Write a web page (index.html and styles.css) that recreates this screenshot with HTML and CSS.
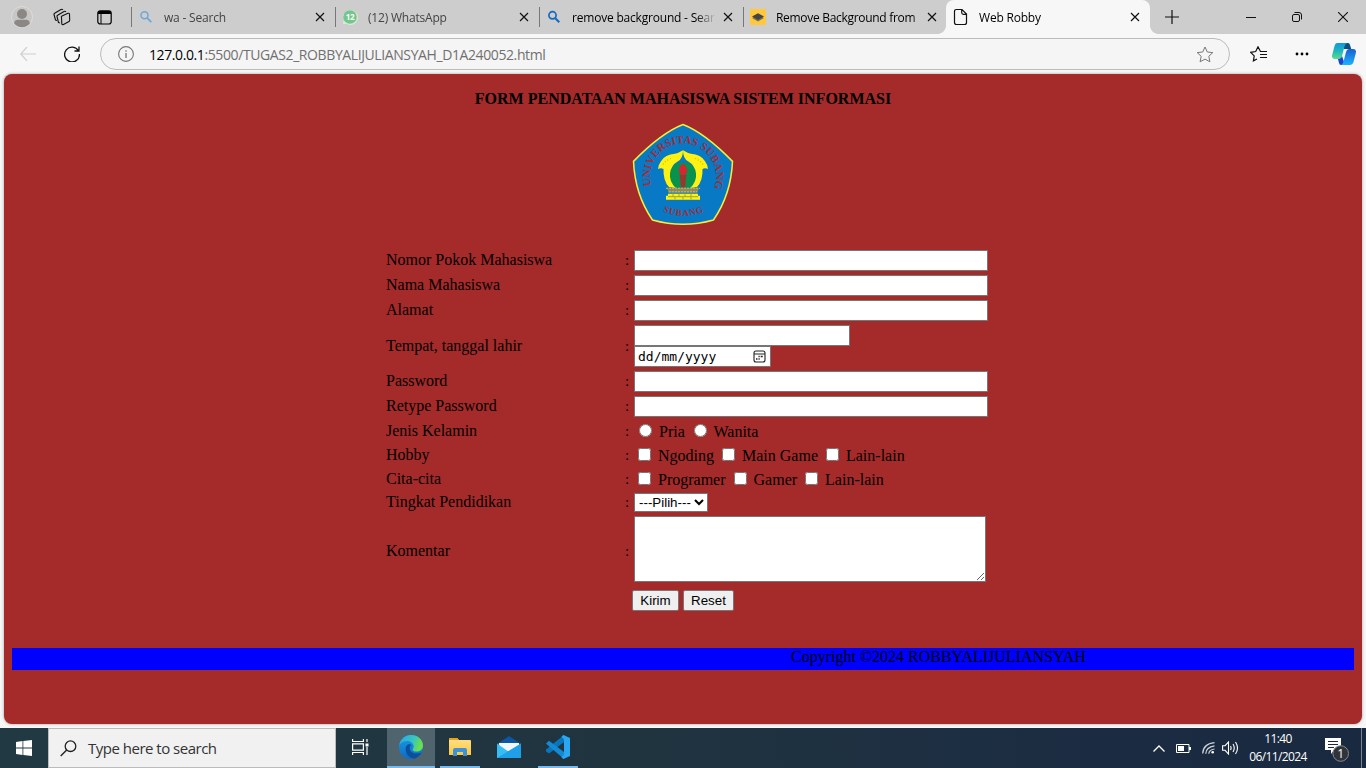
FILE: index.html
```html
<!DOCTYPE html>
<html lang="en">
<head>
<meta charset="utf-8">
<title>Web Robby</title>
<link rel="stylesheet" href="styles.css">
</head>
<body>
<svg width="0" height="0" class="defs">
  <defs>
    <symbol id="x" viewBox="0 0 10 10"><path d="M1 1l8 8M9 1L1 9" stroke="#111" stroke-width="1.2" fill="none"/></symbol>
    <linearGradient id="ea" x1="0" y1="0" x2="1" y2="0.3"><stop offset="0" stop-color="#2aa5e8"/><stop offset=".6" stop-color="#35c3c5"/><stop offset="1" stop-color="#6be04a"/></linearGradient>
    <linearGradient id="eb" x1="0" y1="0" x2="0" y2="1"><stop offset="0" stop-color="#1b9de2"/><stop offset="1" stop-color="#0c6bc9"/></linearGradient>
    <linearGradient id="ca" x1="0" y1="0" x2="0" y2="1"><stop offset="0" stop-color="#1597dc"/><stop offset=".5" stop-color="#1fb6bd"/><stop offset="1" stop-color="#5fdc84"/></linearGradient>
    <linearGradient id="cb" x1="0" y1="0" x2="0" y2="1"><stop offset="0" stop-color="#1d5fd0"/><stop offset="1" stop-color="#18b4ff"/></linearGradient>
    <linearGradient id="fo" x1="0" y1="0" x2="0" y2="1"><stop offset="0" stop-color="#ffe08a"/><stop offset="1" stop-color="#ffc83d"/></linearGradient>
  </defs>
</svg>

<header class="tabbar">
  <div class="tools">
    <svg class="avatar" width="22" height="22" viewBox="0 0 22 22"><circle cx="11" cy="11" r="10.5" fill="#c9c7c5" stroke="#dedcda"/><circle cx="11" cy="8" r="5" fill="#8b8784"/><path d="M3.2 17.5c0-3 2-3.800 4-3.800h7.600c2 0 4 .8 4 3.800a10 10 0 0 1-15.600 0z" fill="#8b8784"/></svg>
    <svg class="spaces" width="18" height="18" viewBox="0 0 18 18" fill="#cdcdcd" stroke="#111" stroke-width="1.1" stroke-linejoin="round"><path d="M4 12.500L2.500 12 1 6.500Q.8 5.500 2 5L8 1.500Q9 1 10 1.700"/><path d="M7 15L5.500 14.500 4 8.500Q3.800 7.500 5 7L11 3.500Q12 3 13 3.700"/><path d="M8.500 9.500Q8 8.400 9 8L15 5.300Q16.500 5 16.500 6.200L16.700 12Q16.700 13 16 13.400L10.500 16.500Q9 17 8.800 15.800z"/></svg>
    <svg class="vert" width="15" height="15" viewBox="0 0 15 15"><rect x=".8" y=".8" width="13.400" height="13.200" rx="2.500" fill="none" stroke="#000" stroke-width="1.200"/><path d="M1 4V3Q1 1 3 1h9q2 0 2 2v1z"/><path d="M4 4v10" stroke="#000"/></svg>
  </div>
  <div class="tab dim"><svg class="fav" width="16" height="16" viewBox="0 0 16 16"><circle cx="6.500" cy="6.300" r="3.500" fill="none" stroke="#6ea6d8" stroke-width="1.500"/><path d="M9.300 9.200l4 4" stroke="#6ea6d8" stroke-width="1.800"/></svg><span class="name">wa - Search</span><svg class="close"><use href="#x"/></svg></div>
  <div class="tab dim"><svg class="fav" width="16" height="16" viewBox="0 0 16 16"><path d="M1 15l.5-4A7.500 7.500 0 1 1 5 15z" fill="#d8e9dc"/><circle cx="8" cy="8" r="6.800" fill="#74c68b"/><text x="8" y="11" font-size="8" text-anchor="middle" fill="#fff" font-weight="bold" class="ui">12</text></svg><span class="name">(12) WhatsApp</span><svg class="close"><use href="#x"/></svg></div>
  <div class="tab"><svg class="fav" width="16" height="16" viewBox="0 0 16 16"><circle cx="6.500" cy="6.300" r="3.600" fill="none" stroke="#1468c0" stroke-width="1.700"/><path d="M9.300 9.200l4 4" stroke="#1468c0" stroke-width="2"/></svg><span class="name">remove background - Sear</span><svg class="close"><use href="#x"/></svg></div>
  <div class="tab"><svg class="fav" width="16" height="16" viewBox="0 0 16 16"><path fill="#ffc83d" d="M0 0h16v16H0z"/><path d="M2 9l6-3 6 3-6 3.500z" fill="#7d7455"/><path d="M2 7.500l6-3.200 6 3.200-6 3.500z" fill="#454545"/></svg><span class="name plain">Remove Background from</span><svg class="close"><use href="#x"/></svg></div>
  <div class="tab active"><svg class="fav" width="16" height="18" viewBox="0 0 16 18"><path d="M3.500 1.500h5.500l4.500 4.500v8.500q0 2-2 2h-8q-2 0-2-2v-11q0-2 2-2zM8.700 1.500v3q0 1.800 1.800 1.800h3" fill="none" stroke="#111" stroke-width="1.200"/></svg><span class="name">Web Robby</span><svg class="close"><use href="#x"/></svg></div>
  <svg class="plus" width="14" height="14" viewBox="0 0 14 14"><path d="M7 0v14M0 7h14" stroke="#111" stroke-width="1.200"/></svg>
  <div class="win">
    <svg width="10" height="10" viewBox="0 0 10 10"><path d="M0 5.500h10" stroke="#111"/></svg>
    <svg width="10" height="10" viewBox="0 0 10 10" fill="none" stroke="#111"><rect x=".5" y="2.500" width="7" height="7" rx="1.500"/><path d="M2.500.5h4.500q2.500 0 2.500 2.500v4.500"/></svg>
    <svg width="10" height="10" viewBox="0 0 10 10"><path d="M0 0l10 10M10 0L0 10" stroke="#111" stroke-width="1.100"/></svg>
  </div>
</header>

<nav class="navbar">
  <svg class="back" width="16" height="14" viewBox="0 0 16 14"><path d="M7 0L.8 7 7 14M1 7h15" fill="none" stroke="#cfcfcf" stroke-width="1.200"/></svg>
  <svg class="reload" width="16" height="16" viewBox="0 0 16 16"><path d="M14.500 5A7.400 7.400 0 1 0 15.400 8M15 .5V5h-4.500" fill="none" stroke="#111" stroke-width="1.300"/></svg>
  <div class="address">
    <svg width="16" height="16" viewBox="0 0 16 16"><circle cx="8" cy="8" r="7.400" fill="none" stroke="#767676" stroke-width="1.100"/><path d="M8 7v5M8 4.200v1.500" stroke="#767676" stroke-width="1.300"/></svg>
    <span class="url"><b>127.0.0.1</b>:5500/TUGAS2_ROBBYALIJULIANSYAH_D1A240052.html</span>
    <svg class="star" width="18" height="17" viewBox="0 0 18 17"><path d="M9 1l2.300 5 5.500.6-4 3.700 1.100 5.500L9 13.100l-4.900 2.700 1.100-5.500-4-3.700L6.700 6z" fill="none" stroke="#777" stroke-linejoin="round"/></svg>
  </div>
  <svg class="favs" width="17" height="16" viewBox="0 0 17 16"><path d="M11 5.500h-.5L8 .8 5.700 5.500.7 6.300l3.500 3.600-.8 5L7 13M11 5.500h6M10 8.500h7M10 11.500h7" fill="none" stroke="#111" stroke-width="1.200"/></svg>
  <svg class="dots" width="14" height="4" viewBox="0 0 14 4"><circle cx="2" cy="2" r="1.400"/><circle cx="7" cy="2" r="1.400"/><circle cx="12" cy="2" r="1.400"/></svg>
  <svg class="copilot" width="24" height="22" viewBox="0 0 24 22"><path d="M11 0h5q1.500 0 2 2l1.200 4H12z" fill="#0a4f80"/><path d="M5 0h10q-2 1-2.700 4L10 13q-.8 3-3 3H3q-4 0-2.700-4.500L2.500 3Q3.300 0 5 0z" fill="url(#ca)"/><path d="M6 16q3 0 4-3l3 9H9q-1.500 0-2-2z" fill="#1546cf"/><path d="M17 6h4q4 0 2.700 4.500L21.500 19q-.8 3-3 3H9q2-1 2.700-4L14 9q.8-3 3-3z" fill="url(#cb)"/></svg>
</nav>

<main class="page">
  <h1>FORM PENDATAAN MAHASISWA SISTEM INFORMASI</h1>
  <svg class="logo" width="102" height="103" viewBox="0 0 102 102" preserveAspectRatio="none">
    <defs><path id="fish" d="M51 27Q46 30 43 30.500 33 31 29 38 26 42 26 45.500 29 44 31.500 45.500 31 57 37 63.500L44 64.500Q37 58 38 50 39 42 46 38 51 35 51 27z"/></defs>
    <path d="M51 1.500Q73 10 100.500 38Q99 71 81.500 96Q51 104.500 20.500 96Q3 71 1.500 38Q29 10 51 1.500z" fill="#0879c4" stroke="#f1ef3c" stroke-width="1.500"/>
    <path id="arc" d="M19.500 63A33 33 0 1 1 82.500 63" fill="none"/>
    <path id="low" d="M30 87Q51 97 74 87" fill="none"/>
    <text class="seal"><textPath href="#arc" startOffset="1" textLength="124">UNIVERSITAS SUBANG</textPath></text>
    <text class="seal small"><textPath href="#low" startOffset="1" textLength="42">SUBANG</textPath></text>
    <path d="M37 64V53Q39 39 51 39t14 14v11z" fill="#08924c"/>
    <use href="#fish" fill="#fff212"/><use href="#fish" fill="#fff212" transform="matrix(-1 0 0 1 102 0)"/>
    <path d="M31 41q3-4 8-6M71 41q-3-4-8-6" stroke="#c5a80e" stroke-dasharray="1 2" fill="none"/>
    <path d="M47.500 51h7l-1.500 13h-4z" fill="#963832"/><path d="M51 40q-5 4-4 9l4 3 4-3q1-5-4-9z" fill="#d52631"/>
    <path d="M35 64h32l-1.500 5h-29z" fill="#8d8970"/><path d="M34 64.500h34M37 68h28" stroke="#c9c03d" stroke-dasharray="2 1"/>
    <path d="M36 70h30v2h2v4H34v-4h2z" fill="#fff212"/><path d="M36 73h30M41 70.500v2M47 70.500v2M53 70.500v2M59 70.500v2M43 73.500v2M51 73.500v2M59 73.500v2" stroke="#50714f" stroke-width=".6"/>
  </svg>

  <form class="form">
    <div class="row text"><label>Nomor Pokok Mahasiswa</label><i>:</i><input class="field" type="text"></div>
    <div class="row text"><label>Nama Mahasiswa</label><i>:</i><input class="field" type="text"></div>
    <div class="row text"><label>Alamat</label><i>:</i><input class="field" type="text"></div>
    <div class="row birth"><label>Tempat, tanggal lahir</label><i>:</i><div><input class="field place" type="text"><div class="field date"><span>dd/mm/yyyy</span><svg width="13" height="13" viewBox="0 0 13 13"><rect x="1" y="1" width="11" height="11" rx="2" fill="none" stroke="#222" stroke-width="1.100"/><path d="M1 4h11" stroke="#222"/><path d="M5.500 6.500h1.200M7.700 6.500h2M3 9h1.500M5.500 9h1.200" stroke="#222" stroke-width="1.300"/></svg></div></div></div>
    <div class="row text"><label>Password</label><i>:</i><input class="field" type="password"></div>
    <div class="row text"><label>Retype Password</label><i>:</i><input class="field" type="password"></div>
    <div class="row choice"><label>Jenis Kelamin</label><i>:</i><div class="opts"><input type="radio"> Pria <input type="radio"> Wanita</div></div>
    <div class="row choice"><label>Hobby</label><i>:</i><div class="opts"><input type="checkbox"> Ngoding <input type="checkbox"> Main Game <input type="checkbox"> Lain-lain</div></div>
    <div class="row choice"><label>Cita-cita</label><i>:</i><div class="opts"><input type="checkbox"> Programer <input type="checkbox"> Gamer <input type="checkbox"> Lain-lain</div></div>
    <div class="row level"><label>Tingkat Pendidikan</label><i>:</i><select><option>---Pilih---</option></select></div>
    <div class="row comment"><label>Komentar</label><i>:</i><textarea></textarea></div>
    <div class="actions"><button type="button" class="send">Kirim</button><button type="button" class="reset">Reset</button></div>
  </form>
  <footer class="copy"><span>Copyright ©2024 ROBBYALIJULIANSYAH</span></footer>
</main>

<div class="taskbar">
  <div class="start"><svg width="16" height="16" viewBox="0 0 16 16" fill="#fff"><path d="M0 2l6.500-.9v6.400H0zM7.300 1L16 0v7.500H7.300zM0 8.500h6.500V15L0 14zM7.300 8.500H16V16l-8.700-1z"/></svg></div>
  <div class="search"><svg width="17" height="17" viewBox="0 0 17 17"><circle cx="10.500" cy="6.200" r="5.300" fill="none" stroke="#222" stroke-width="1.300"/><path d="M6.700 10L.7 16" stroke="#222" stroke-width="1.400"/></svg><span>Type here to search</span></div>
  <div class="task view"><svg width="17" height="16" viewBox="0 0 17 16" fill="none" stroke="#fff" stroke-width="1.200"><path d="M.6 0v2.500h10.800V0M.6 16v-2.500h10.800V16M.6 4.800h10.800v6.400H.6zM15 0v3M15 8v8"/><path d="M13.500 4.500h3v3h-3z" fill="#fff" stroke="none"/></svg></div>
  <div class="task edge"><svg width="24" height="24" viewBox="0 0 24 24"><circle cx="12" cy="12" r="12" fill="url(#eb)"/><path d="M.3 10C1.500 4 6.500 0 12 0c7 0 12 5 12 10.500 0 4-3 6-6.500 6-2.500 0-4-1-4-1.800 0-.6 1.200-1.200 1.200-3.200C14.700 8.500 12 6 8.500 6 4.500 6 1.500 8 .3 10z" fill="url(#ea)"/><path d="M8.700 9.500c-1.600 1.500-2 3-2 5 0 5 4.300 9.300 9 8.900 3-1 5.700-3.400 7-6-3 1.600-7.500 1.600-10-.4-2.500-2-2.700-5.400 0-7.200-1.300-.7-2.700-.9-4-.3z" fill="#0c4f9b"/></svg></div>
  <div class="task files"><svg width="22" height="20" viewBox="0 0 22 20"><path d="M0 2q0-1 1-1h7l2 2h11q1 0 1 1v14H0z" fill="url(#fo)"/><path d="M0 3V2q0-1 1-1h7q1 0 1.500 2z" fill="#e8a317"/><path d="M4 19v-6q0-2 2-2h10q2 0 2 2v6h-4v-4H8v4z" fill="#3f91d6"/></svg></div>
  <div class="task mail"><svg width="24" height="22" viewBox="0 0 24 22"><path d="M0 8L12 0l12 8v4H0z" fill="#0b57a4"/><path d="M2 7h20v8H2z" fill="#f3f6f8"/><path d="M0 7.500L12 16l12-8.500V22H0z" fill="#35bdf4"/><path d="M0 22L24 7.500V22z" fill="#1e9fe8"/></svg></div>
  <div class="task code"><svg width="24" height="24" viewBox="0 0 24 24"><path d="M18 0v7L3 18.500 0 16.500v-2z" fill="#0876bd"/><path d="M0 8.500L3 5.700 18 17v7L1 9.500z" fill="#128bd4"/><path d="M17.500 0L24 3v18l-6.500 3-2-1.500 2.500-3V4.500l-2.500-3z" fill="#2aa7f2"/></svg></div>
  <div class="tray">
    <svg class="up" width="12" height="7" viewBox="0 0 12 7"><path d="M.5 6.500L6 1l5.500 5.500" fill="none" stroke="#fff" stroke-width="1.300"/></svg>
    <svg class="bat" width="15" height="9" viewBox="0 0 15 9"><path d="M.5.5h12.500v8H.5z" fill="none" stroke="#fff"/><path d="M2 2h6v5H2zM13 3h2v3h-2z" fill="#fff"/></svg>
    <svg class="wifi" width="13" height="12" viewBox="0 0 13 12" fill="none" stroke="#cdd3da" stroke-width="1.200"><path d="M.7 11.500Q1 2 12.500.7M3.700 11.700Q4 5 12.500 3.800M6.800 11.700Q7 8 12.500 7"/><circle cx="10.700" cy="10.300" r="1.300" fill="#fff" stroke="none"/></svg>
    <svg class="vol" width="17" height="14" viewBox="0 0 17 14" fill="none" stroke="#fff" stroke-width="1.100"><path d="M.6 4.700h2.500L6.500 1v12L3.100 9.300H.6zM8.500 5q1.200 2 0 4M11 3q2.500 4 0 8M13.500 1q4 6 0 12"/></svg>
    <div class="clock"><span>11:40</span><span class="day">06/11/2024</span></div>
    <svg class="note" width="26" height="26" viewBox="0 0 26 26"><path d="M0 0h16v12H9l-3 4v-4H0z" fill="#fff"/><path d="M3 3.500h10M3 6.500h10M3 9.500h6" stroke="#1b2a40"/><circle cx="15.700" cy="15.500" r="7.800" fill="#303439" stroke="#858a90"/><text x="15.700" y="19.700" text-anchor="middle" font-size="12" fill="#fff" class="ui">1</text></svg>
  </div>
</div>
</body>
</html>
```
FILE: styles.css
```css
* { box-sizing: border-box; }
html, body { margin: 0; height: 100%; overflow: hidden; }
body { width: 1366px; height: 768px; display: flex; flex-direction: column; background: #f7f7f7; font-family: "Liberation Serif", serif; font-size: 16px; color: #000; }
svg { display: block; flex: none; }
.defs { position: absolute; }
.ui { font-family: "Open Sans", sans-serif; }

.tabbar { height: 34px; flex: none; display: flex; align-items: center; background: #cdcdcd; font: 12px "Open Sans", sans-serif; letter-spacing: -0.2px; }
.tools { width: 131px; display: flex; align-items: center; padding-left: 11px; }
.spaces { margin-left: 20px; }
.vert { margin-left: 26px; }
.tab { width: 204px; height: 34px; display: flex; align-items: center; padding: 0 10px 0 6px; position: relative; }
.tab::before { content: ""; width: 1px; height: 20px; background: #777; margin-left: -6px; margin-right: 6px; }
.fav { margin-right: 10px; }
.tab .name { flex: 1; min-width: 0; white-space: nowrap; margin-right: 7px; -webkit-mask-image: linear-gradient(90deg, #000 calc(100% - 20px), transparent); }
.tab .plain { -webkit-mask-image: linear-gradient(90deg, #000 calc(100% - 8px), #0006); letter-spacing: -0.3px; }
.dim .name { color: #444; }
.close { width: 10px; height: 10px; }
.active { background: #f7f7f7; border-radius: 8px 8px 0 0; margin-left: -1px; }
.active::before { background: none; }
.active::after { content: ""; position: absolute; left: -8px; right: -8px; bottom: 0; height: 8px; background: radial-gradient(circle at 0 0, transparent 7.500px, #f7f7f7 8px) left / 8px 8px no-repeat, radial-gradient(circle at 100% 0, transparent 7.500px, #f7f7f7 8px) right / 8px 8px no-repeat; }
.plus { margin-left: 15px; }
.win { margin-left: auto; display: flex; gap: 36px; padding-right: 18px; }

.navbar { height: 40px; flex: none; display: flex; align-items: center; padding-left: 20px; }
.reload { margin-left: 28px; }
.address { width: 1130px; height: 32px; margin-left: 20px; border: 1px solid #bbb; border-radius: 16px; background: #f5f5f5; display: flex; align-items: center; padding: 0 15px 0 17px; }
.url { flex: 1; margin-left: 15px; font: 14px "Open Sans", sans-serif; letter-spacing: -0.4px; color: #707070; white-space: nowrap; }
.url b { font-weight: normal; color: #000; }
.favs { margin-left: 20px; }
.dots { margin-left: 28px; }
.copilot { margin-left: 23px; }

.page { height: 650px; flex: none; margin: 0 4px; border-radius: 8px; background: #a52a2a; box-shadow: 0 0 3px #999; display: flex; flex-direction: column; align-items: center; }
h1 { margin: 16px 0 0; font-size: 16px; line-height: 18px; font-weight: bold; }
.logo { margin-top: 15px; }
.seal { font: bold 11px "Liberation Serif", serif; fill: #a92b35; }
.small { font-size: 9px; }

.form { width: 602px; margin: 22px 0 0 8px; }
.row { height: 25px; display: grid; grid-template-columns: 239px 9px 354px; align-items: center; line-height: 18px; }
.row i { font-style: normal; font-size: 15px; }
.text label, .text i, .level label, .level i { padding-bottom: 1px; }
.field { width: 354px; height: 21px; padding: 1px 2px; border: 1px solid #767676; background: #fff; margin: 0; display: block; }
.birth { height: 46px; }
.place { width: 216px; }
.date { width: 137px; display: flex; align-items: center; justify-content: space-between; padding: 0 4px 0 3px; font: 13px "DejaVu Sans Mono", monospace; }
.choice { height: 24px; }
.opts { white-space: nowrap; height: 20px; line-height: 22px; }
.level { height: 23px; }
select { width: 74px; height: 19px; justify-self: start; font: 13.333px "Liberation Sans", sans-serif; border: 1px solid #767676; background: #fff; color: #000; padding: 0; margin: 0; }
.comment { height: 74px; }
.comment textarea { width: 352px; height: 66px; margin: 2px 0 0; align-self: start; border: 1px solid #767676; display: block; }
.actions { display: flex; gap: 4px; margin: 2px 0 0 246px; }
.actions button { height: 21px; padding: 0; font: 13.333px "Liberation Sans", sans-serif; border: 1px solid #767676; border-radius: 2px; background: #efefef; color: #000; }
.send { width: 47px; }
.reset { width: 51px; }
.copy { width: 1342px; height: 22px; margin-top: 37px; background: #00f; line-height: 18px; padding-left: 779px; }

.taskbar { height: 40px; flex: none; margin-top: 4px; display: flex; align-items: center; background: linear-gradient(90deg, #203943 0, #20343f 45%, #1b2c42 80%, #192940); }
.start { width: 48px; padding-left: 16px; }
.search { width: 288px; height: 40px; background: #f1f1f1; border: 1px solid #bbb; display: flex; align-items: center; padding-left: 11px; font: 15px "Open Sans", sans-serif; color: #333; letter-spacing: -0.5px; }
.search span { margin-left: 11px; }
.task { height: 40px; display: flex; align-items: center; justify-content: center; border-bottom: 2px solid transparent; width: 40px; }
.view { margin-left: 4px; margin-right: 7px; }
.edge { width: 48px; background: #50646d; border-color: #76b9ed; }
.files { margin-left: 5px; border-color: #76b9ed; }
.mail { margin-left: 9px; }
.code { margin-left: 9px; border-color: #76b9ed; }
.tray { margin-left: auto; display: flex; align-items: center; height: 40px; color: #fff; border-right: 1px solid #7a8494; margin-right: 4px; }
.bat { margin-left: 11px; }
.wifi { margin-left: 11px; }
.vol { margin-left: 7px; }
.clock { width: 60px; margin-left: 9px; display: flex; flex-direction: column; align-items: center; font: 12px/18px "Open Sans", sans-serif; letter-spacing: -0.600px; white-space: nowrap; }
.note { margin: 6px 10px 0 17px; }
```
